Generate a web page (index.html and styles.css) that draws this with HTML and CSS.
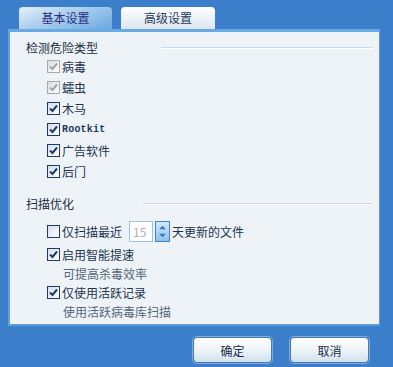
FILE: index.html
```html
<!DOCTYPE html>
<html lang="zh-CN">
<head>
    <meta charset="UTF-8">
    <meta name="viewport" content="width=device-width, initial-scale=1.0">
    <title>扫描设置</title>
    <link rel="stylesheet" href="styles.css">
</head>
<body>

    <!-- Pestañas -->
    <div class="tabs">
        <div class="tab tab-active">基本设置</div>
        <div class="tab">高级设置</div>
    </div>

    <!-- Panel principal -->
    <div class="panel">
        <div class="group-title">
            <span>检测危险类型</span>
            <span class="group-line line-first"></span>
        </div>
        <div class="check-list">
            <div class="check-row disabled"><span class="box"><svg viewBox="0 0 11 11"><path d="M2 5.5 L4.5 8 L9 2.5"/></svg></span>病毒</div>
            <div class="check-row disabled"><span class="box"><svg viewBox="0 0 11 11"><path d="M2 5.5 L4.5 8 L9 2.5"/></svg></span>蠕虫</div>
            <div class="check-row"><span class="box"><svg viewBox="0 0 11 11"><path d="M2 5.5 L4.5 8 L9 2.5"/></svg></span>木马</div>
            <div class="check-row"><span class="box"><svg viewBox="0 0 11 11"><path d="M2 5.5 L4.5 8 L9 2.5"/></svg></span><span class="mono">Rootkit</span></div>
            <div class="check-row"><span class="box"><svg viewBox="0 0 11 11"><path d="M2 5.5 L4.5 8 L9 2.5"/></svg></span>广告软件</div>
            <div class="check-row"><span class="box"><svg viewBox="0 0 11 11"><path d="M2 5.5 L4.5 8 L9 2.5"/></svg></span>后门</div>
        </div>

        <div class="group-title group-second">
            <span>扫描优化</span>
            <span class="group-line line-second"></span>
        </div>
        <div class="check-list">
            <div class="check-row spin-row">
                <span class="box"></span>仅扫描最近
                <span class="spin-input">15</span>
                <span class="spin-btn">
                    <svg viewBox="0 0 15 21"><path d="M3.5 8 L7.5 4 L11.5 8 Z"/><path d="M3.5 13 L7.5 17 L11.5 13 Z"/></svg>
                </span>
                天更新的文件
            </div>
            <div class="check-row"><span class="box"><svg viewBox="0 0 11 11"><path d="M2 5.5 L4.5 8 L9 2.5"/></svg></span>启用智能提速</div>
            <div class="hint">可提高杀毒效率</div>
            <div class="check-row"><span class="box"><svg viewBox="0 0 11 11"><path d="M2 5.5 L4.5 8 L9 2.5"/></svg></span>仅使用活跃记录</div>
            <div class="hint">使用活跃病毒库扫描</div>
        </div>
    </div>

    <!-- Botones -->
    <div class="footer">
        <button class="dlg-btn">确定</button>
        <button class="dlg-btn">取消</button>
    </div>

</body>
</html>
```

FILE: styles.css
```css
/* Estilos generales */
body {
    margin: 0;
    padding: 0;
    width: 393px;
    height: 367px;
    overflow: hidden;
    background-color: #3b7fcb;
    font-family: "Noto Sans CJK SC", "DejaVu Sans", sans-serif;
    font-size: 12px;
    color: #1d3450;
}

/* Pestañas */
.tabs {
    display: flex;
    gap: 9px;
    padding: 7px 0 0 19px;
    height: 22px;
}

.tab {
    width: 94px;
    height: 22px;
    line-height: 22px;
    text-align: center;
    border-radius: 4px 4px 0 0;
    color: #1f3a5e;
    background: linear-gradient(#ffffff, #dbe6ef);
}

.tab-active {
    width: 93px;
    color: #2c2f7c;
    background: linear-gradient(160deg, #e4f0fb 0%, #a9cdee 45%, #6aa8e2 100%);
}

/* Panel */
.panel {
    box-sizing: border-box;
    margin-left: 8px;
    width: 372px;
    height: 297px;
    padding: 8px 0 0 16px;
    background-color: #edf3f7;
    border-top: 3px solid #6aa9e1;
    border-left: 2px solid #64a2dc;
    border-bottom: 2px solid #5c9ad8;
    border-right: 1px solid #5e9bd6;
}

.group-title {
    display: flex;
    align-items: center;
    height: 16px;
    line-height: 16px;
    color: #1b2d40;
}

.group-second {
    margin-top: 14px;
}

.group-line {
    height: 1px;
    background-color: #c6dcec;
    border-bottom: 1px solid #ffffff;
}

.line-first {
    margin-left: 63px;
    width: 212px;
}

.line-second {
    margin-left: 69px;
    width: 229px;
}

/* Casillas */
.check-list {
    padding-left: 21px;
}

.check-row {
    display: flex;
    align-items: center;
    height: 21px;
}

.box {
    box-sizing: border-box;
    width: 13px;
    height: 13px;
    margin-right: 2px;
    border: 1px solid #1e3a6a;
    background: linear-gradient(135deg, #d3dde8, #ffffff);
    display: flex;
    align-items: center;
    justify-content: center;
}

.box svg {
    width: 11px;
    height: 11px;
    fill: none;
    stroke: #1e3a6a;
    stroke-width: 2;
}

.disabled .box {
    border-color: #a9a9a9;
}

.disabled .box svg {
    stroke: #a3a3a3;
}

.mono {
    font-family: "Liberation Mono", monospace;
    font-size: 10px;
    font-weight: bold;
    letter-spacing: 0.2px;
    color: #22385a;
}

/* Selector numérico */
.spin-row {
    height: 22px;
    margin-top: 8px;
    margin-bottom: 2px;
}

.spin-input {
    box-sizing: border-box;
    width: 24px;
    height: 21px;
    margin-left: 7px;
    padding-left: 3px;
    line-height: 19px;
    border: 1px solid #9dc2e6;
    background-color: #ffffff;
    color: #b0b0b0;
}

.spin-btn {
    box-sizing: border-box;
    width: 15px;
    height: 21px;
    margin: 0 2px 0 2px;
    border: 1px solid #3f86cf;
    background: linear-gradient(#d6e9f9, #8ec0ea);
    display: flex;
}

.spin-btn svg {
    width: 13px;
    height: 19px;
    fill: #2d78c6;
}

.hint {
    height: 17px;
    line-height: 17px;
    padding-left: 16px;
    color: #556677;
}

/* Botones */
.footer {
    display: flex;
    justify-content: flex-end;
    gap: 18px;
    padding: 11px 24px 0 0;
}

.dlg-btn {
    width: 79px;
    height: 26px;
    padding: 0;
    border: 1px solid #4e78a6;
    border-radius: 4px;
    box-shadow: 0 0 0 1px #78aee2;
    background: linear-gradient(#ffffff 0%, #eef4f9 50%, #cfe1ef 100%);
    font-family: "Noto Sans CJK SC", "DejaVu Sans", sans-serif;
    font-size: 12px;
    color: #1a2c4a;
}
```
